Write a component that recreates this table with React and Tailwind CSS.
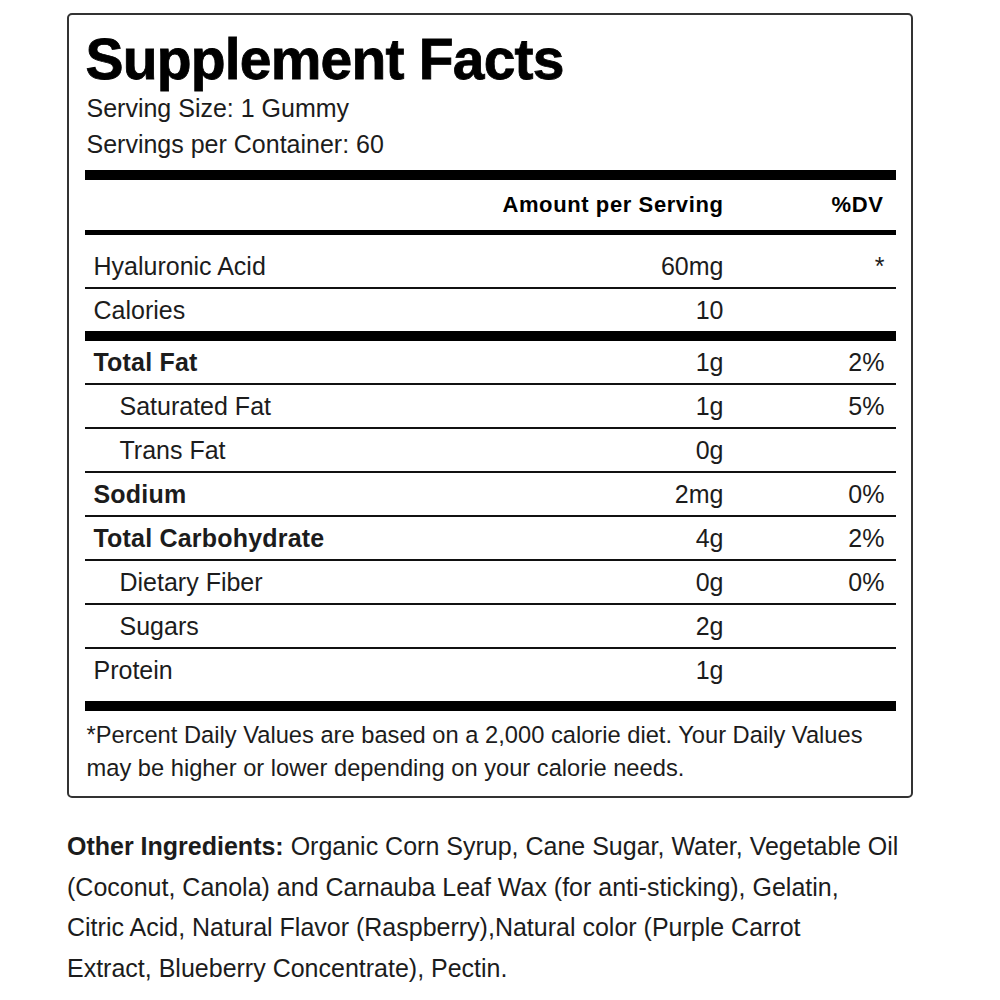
import React from "react";

const rows = [
  { label: "Total Fat", amount: "1g", dv: "2%", bold: true },
  { label: "Saturated Fat", amount: "1g", dv: "5%", indent: true },
  { label: "Trans Fat", amount: "0g", dv: "", indent: true },
  { label: "Sodium", amount: "2mg", dv: "0%", bold: true },
  { label: "Total Carbohydrate", amount: "4g", dv: "2%", bold: true },
  { label: "Dietary Fiber", amount: "0g", dv: "0%", indent: true },
  { label: "Sugars", amount: "2g", dv: "", indent: true },
];

const Row = ({ label, amount, dv, bold, indent }) => (
  <div className="flex h-[42px] items-center leading-[42px]">
    <div
      className={
        (indent ? "pl-[35px] " : "pl-[9px] ") +
        (bold ? "font-bold tracking-[0.2px] " : "") +
        "flex-1 whitespace-nowrap"
      }
    >
      {label}
    </div>
    <div className="w-[200px] text-right">{amount}</div>
    <div className="w-[172px] pr-[11px] text-right">{dv}</div>
  </div>
);

const Line = () => <div className="h-[2px] bg-[#111]" />;

const App = () => {
  return (
    <div
      className="min-h-screen bg-white text-[25px] text-[#1c1c1c]"
      style={{ fontFamily: '"Liberation Sans", Arial, sans-serif' }}
    >
      <div className="pt-[13px] pl-[67px]">
        <div className="w-[846px] rounded-[5px] border-2 border-[#333] px-[15.5px] pt-[15.5px] pb-[11.5px]">
          <h1 className="h-[57px] pl-[1px] text-[57px] font-bold leading-[57px] tracking-[-0.8px] text-black whitespace-nowrap [-webkit-text-stroke:0.8px_black]">
            Supplement Facts
          </h1>
          <div className="mt-[2px] pl-[2px] leading-[36px]">
            <p>Serving Size: 1 Gummy</p>
            <p>Servings per Container: 60</p>
          </div>
          <div className="mt-[8px] h-[10px] bg-black" />
          <div className="flex h-[50px] items-center text-[22px] font-bold tracking-[0.6px] text-black">
            <div className="flex-1" />
            <div className="text-right">Amount per Serving</div>
            <div className="w-[172px] pr-[12px] text-right">%DV</div>
          </div>
          <div className="h-[5px] bg-black" />
          <div className="mt-[10px]">
            <Row label="Hyaluronic Acid" amount="60mg" dv="*" />
          </div>
          <Line />
          <Row label="Calories" amount="10" dv="" />
          <div className="h-[10px] bg-black" />
          {rows.map((r) => (
            <React.Fragment key={r.label}>
              <Row {...r} />
              <Line />
            </React.Fragment>
          ))}
          <Row label="Protein" amount="1g" dv="" />
          <div className="mt-[10px] h-[10px] bg-black" />
          <div className="pt-[8px] pl-[2px] text-[23.7px] leading-[33px] whitespace-nowrap">
            <p>*Percent Daily Values are based on a 2,000 calorie diet. Your Daily Values</p>
            <p>may be higher or lower depending on your calorie needs.</p>
          </div>
        </div>
        <div className="mt-[28px] text-[25px] leading-[40.67px] whitespace-nowrap">
          <p>
            <span className="font-bold">Other Ingredients:</span> Organic Corn Syrup, Cane Sugar, Water, Vegetable Oil
          </p>
          <p>(Coconut, Canola) and Carnauba Leaf Wax (for anti-sticking), Gelatin,</p>
          <p>Citric Acid, Natural Flavor (Raspberry),Natural color (Purple Carrot</p>
          <p>Extract, Blueberry Concentrate), Pectin.</p>
        </div>
      </div>
    </div>
  );
};

export default App;
